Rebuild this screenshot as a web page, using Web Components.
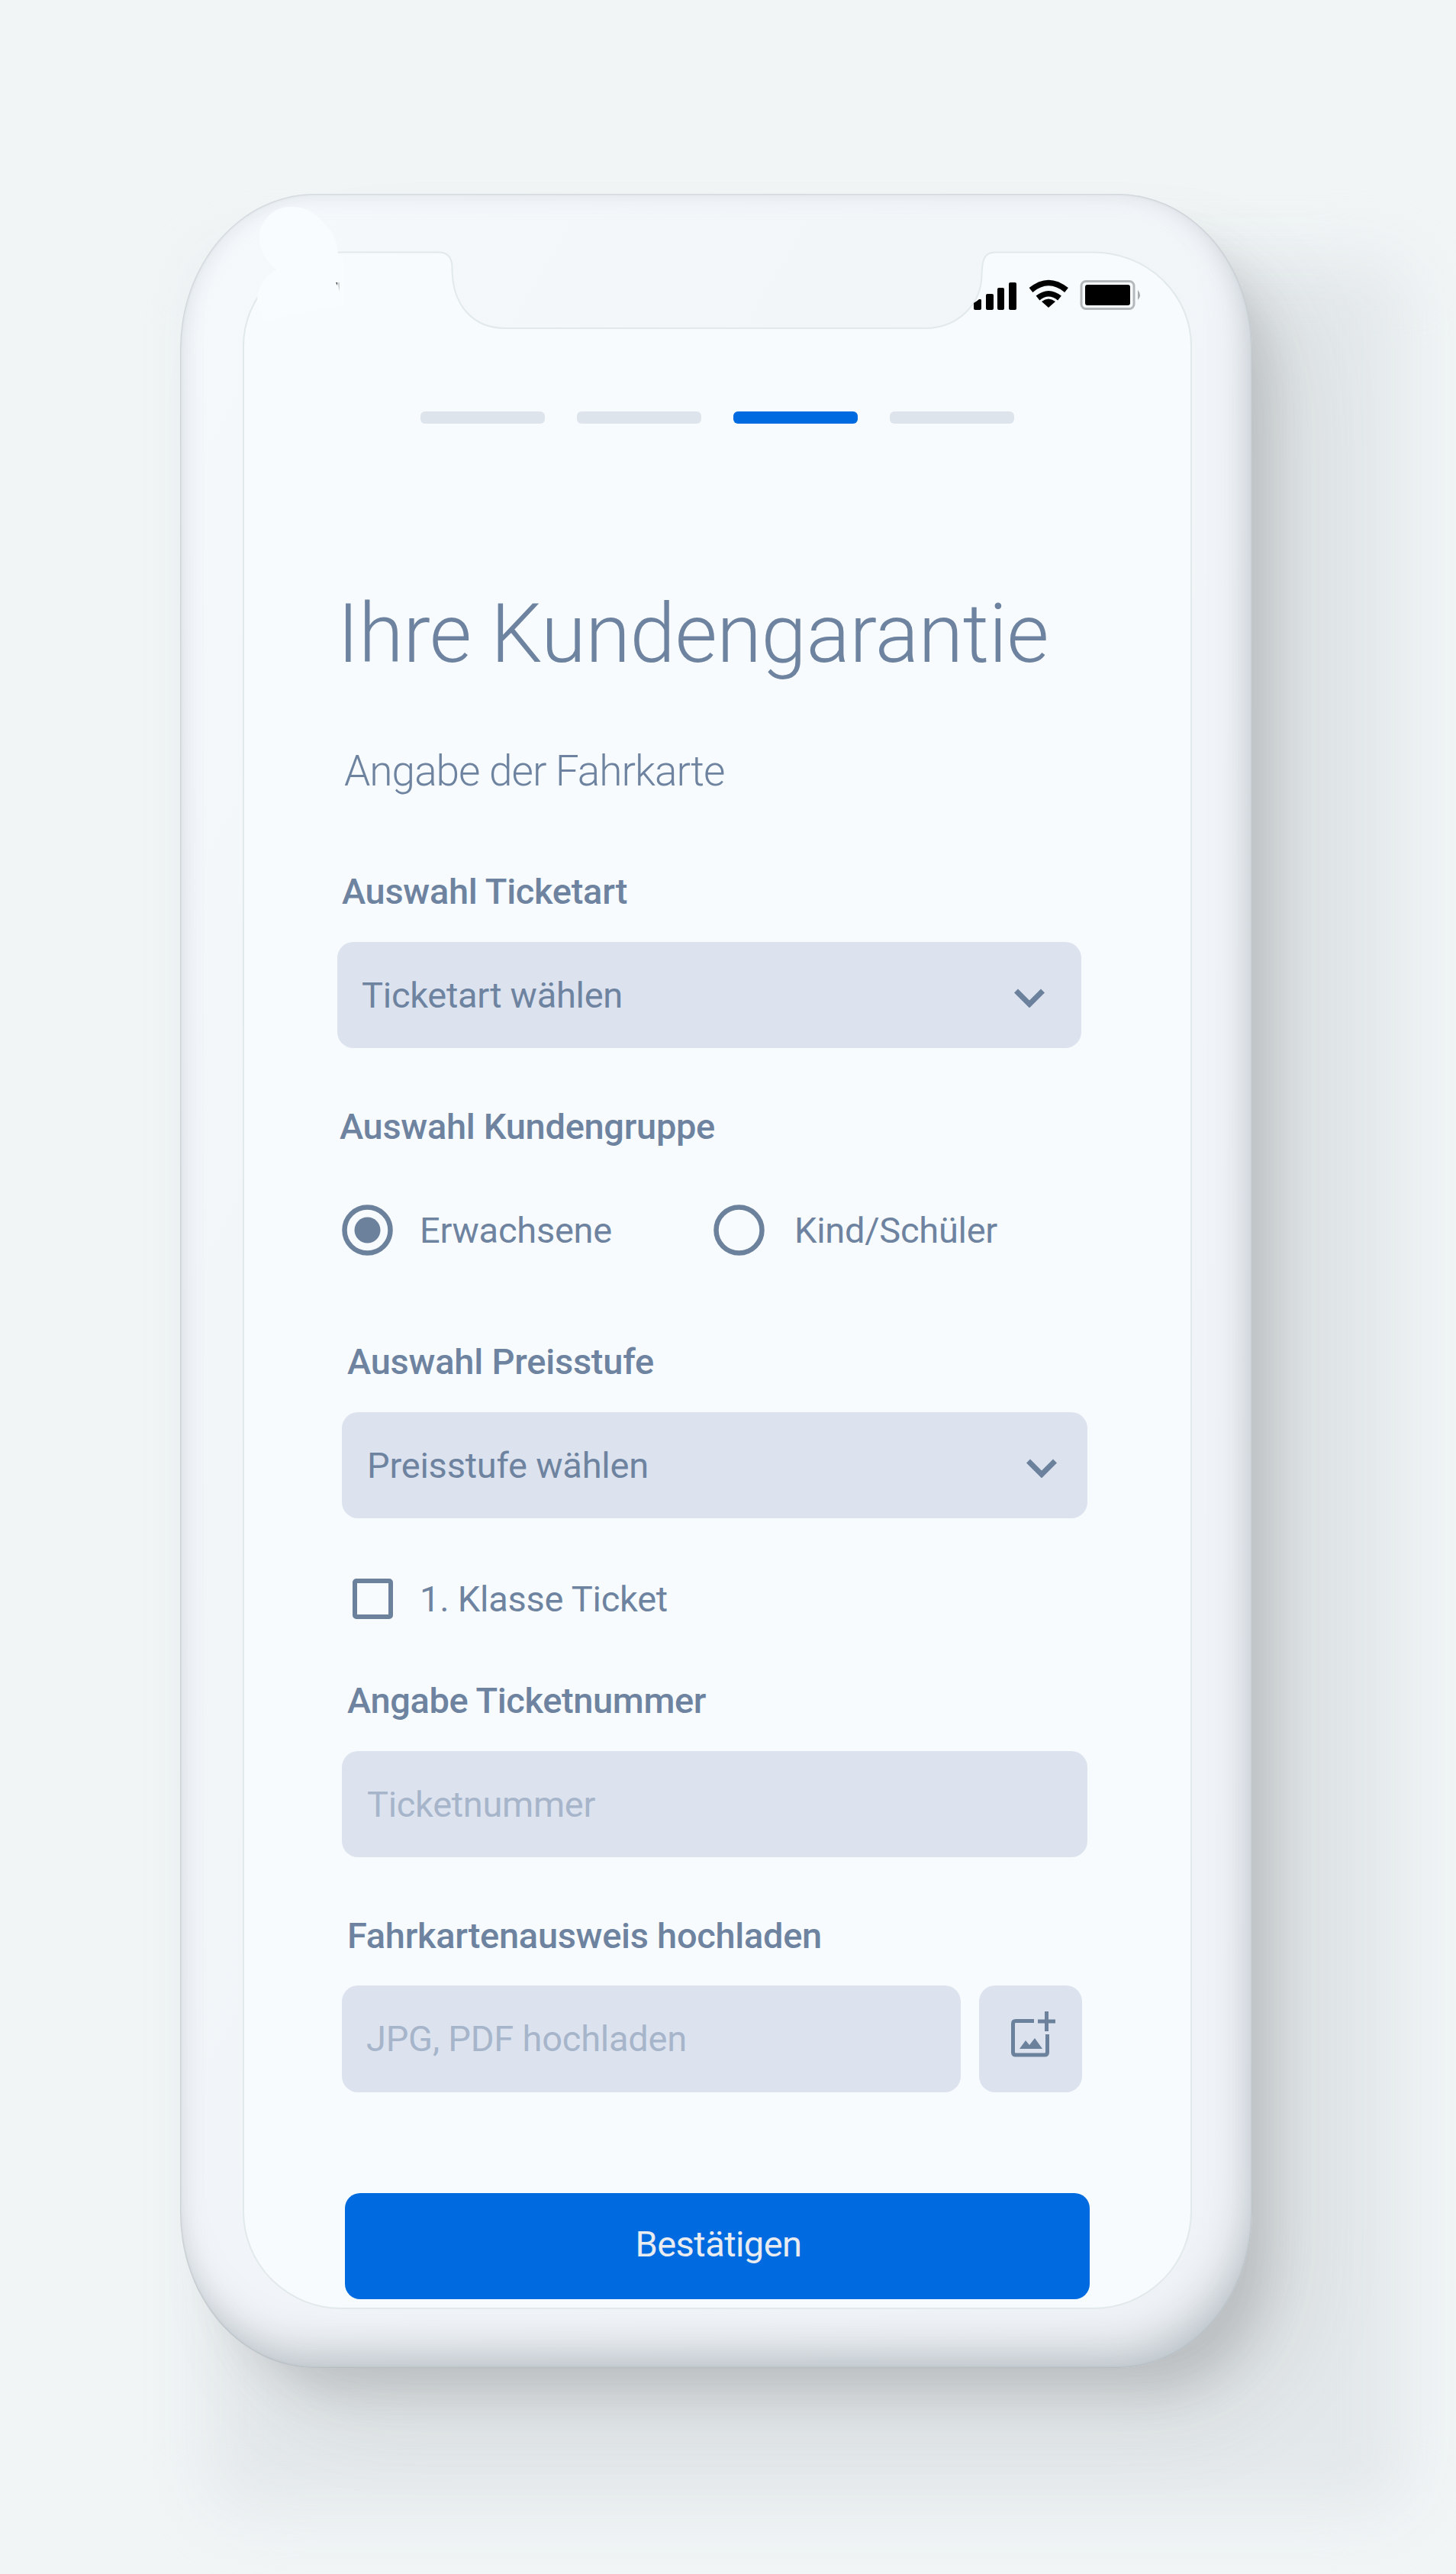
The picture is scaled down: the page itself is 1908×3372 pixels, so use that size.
<!DOCTYPE html>
<html lang="de">
<head>
<meta charset="utf-8">
<title>Ihre Kundengarantie</title>
<style>
    body {
        margin: 0;
        height: 3372px;
        overflow: hidden;
        background: #f1f5f6;
        color: #6e839f;
        font-family: Roboto, "Liberation Sans", sans-serif;
    }
</style>
</head>
<body>
<phone-frame>
    <step-bar steps="4" active="3"></step-bar>
    <form-title style="margin: 216px 0 0 123px"><fit-text width="932">Ihre Kundengarantie</fit-text></form-title>
    <form-subtitle style="margin: 87px 0 0 132px"><fit-text width="498.5">Angabe der Fahrkarte</fit-text></form-subtitle>

    <form-label style="margin: 99px 0 0 129px"><fit-text width="374">Auswahl Ticketart</fit-text></form-label>
    <form-field arrow style="margin: 39px 0 0 123px; width: 975px; --end: 48px"><fit-text width="342">Ticketart wählen</fit-text></form-field>

    <form-label style="margin: 76px 0 0 126px"><fit-text width="492">Auswahl Kundengruppe</fit-text></form-label>
    <radio-group>
        <radio-option checked><fit-text width="252">Erwachsene</fit-text></radio-option>
        <radio-option style="--gap: 39px"><fit-text width="266">Kind/Schüler</fit-text></radio-option>
    </radio-group>

    <form-label style="margin: 112px 0 0 136px"><fit-text width="402">Auswahl Preisstufe</fit-text></form-label>
    <form-field arrow style="margin: 39px 0 0 129px; width: 977px; --start: 33px; --end: 40px"><fit-text width="369">Preisstufe wählen</fit-text></form-field>
    <check-option><fit-text width="325">1. Klasse Ticket</fit-text></check-option>

    <form-label style="margin: 80px 0 0 136px"><fit-text width="470">Angabe Ticketnummer</fit-text></form-label>
    <form-field hint style="margin: 39px 0 0 129px; width: 977px; --start: 33px"><fit-text width="299">Ticketnummer</fit-text></form-field>

    <form-label style="margin: 76px 0 0 136px"><fit-text width="622">Fahrkartenausweis hochladen</fit-text></form-label>
    <upload-row>
        <form-field hint style="width: 811px; height: 140px"><fit-text width="420">JPG, PDF hochladen</fit-text></form-field>
    </upload-row>
    <submit-button><fit-text width="218">Bestätigen</fit-text></submit-button>
</phone-frame>

<script>
function define(name, html, setup) {
    const template = document.createElement('template');
    template.innerHTML = html;
    window.customElements.define(name, class extends HTMLElement {
        constructor() {
            super();
            this._shadowRoot = this.attachShadow({mode:'open'});
            this._shadowRoot.appendChild(template.content.cloneNode(true));
        }
        connectedCallback() {
            if (setup) setup(this, this._shadowRoot);
        }
    });
}

define('phone-frame', `
    <style>
        :host {
            display: block;
            position: relative;
            box-sizing: border-box;
            width: 1405px;
            height: 2848px;
            margin: 254px 0 0 236px;
            padding: 76px 79px 77px 83px;
        }
        .cast {
            position: absolute;
            inset: 86px -204px -188px 34px;
            border-radius: 50px;
            background: #e3e8ea;
            filter: blur(42px);
        }
        .shade {
            position: absolute;
            inset: 0;
            border-radius: 176px / 204px;
            background: linear-gradient(120deg, #f5f9fc 0%, #f3f6f9 30%, #eff2f6 100%);
            box-shadow:
                42px 48px 54px -16px rgba(95, 96, 98, .2),
                72px 76px 120px -18px rgba(110, 113, 116, .14);
        }
        .shade::after {
            content: "";
            position: absolute;
            inset: 0;
            border-radius: inherit;
            box-shadow:
                inset 0 0 2px 1px rgba(120, 130, 135, .26),
                inset 0 0 28px rgba(180, 189, 200, .36),
                inset -14px -36px 52px -12px rgba(128, 142, 147, .42);
        }
        .glass {
            position: absolute;
            left: 0;
            top: 0;
        }
        .screen {
            position: relative;
            display: flex;
            flex-direction: column;
            align-items: flex-start;
        }
    </style>
    <div class="cast"></div>
    <div class="shade"></div>
    <svg class="glass" width="1405" height="2848" viewBox="236 254 1405 2848">
        <path fill="#f7fbfe" stroke="#e1e9eb" stroke-width="2" d="M447 330.500H575Q592 330.500 592.500 350C592 400 620 430 662 430H1212C1254 430 1286 400 1286.500 360C1287 344 1288 330.500 1304 330.500H1433A128 123 0 0 1 1561 453.500V2897A128 127 0 0 1 1433 3024H447A128 127 0 0 1 319 2897V453.500A128 123 0 0 1 447 330.500Z"/>
        <path fill="#f8fcff" d="M443 337C443 320 439 305 422 290C414 279 400 271 382 271C362 270 348 283 341 300C337 318 343 338 362 353C345 363 338 376 337 394L345 420L450 400V337Z"/>
        <path fill="#42484c" d="M440 370H442V374Z"/>
        <path fill="#cdd2d5" d="M442 370H445V382Z"/>
    </svg>
    <div class="screen">
        <status-icons></status-icons>
        <slot></slot>
    </div>
`);

define('status-icons', `
    <style>
        :host {
            display: block;
            height: 209px;
            padding-left: 957px;
            box-sizing: border-box;
        }
        svg { display: block; margin-top: 36px; }
    </style>
    <svg width="222" height="42" viewBox="1276 366 222 42">
        <path d="M1276 397Q1281 394 1283 392H1285Q1286 392 1286 394V404Q1286 406 1284 406H1278Q1276 406 1276 404Z"/>
        <rect x="1292" y="385" width="10" height="21" rx="2"/>
        <rect x="1307" y="377" width="9" height="29" rx="2"/>
        <rect x="1322" y="370" width="10" height="36" rx="2"/>
        <g fill="none" stroke="#000" stroke-width="7.500">
            <path d="M1351 380Q1374 361 1397.500 380"/>
            <path d="M1360 390.500Q1374 379 1388.500 390.500"/>
        </g>
        <path d="M1374 403L1365 395Q1374 388 1383 395Z"/>
        <rect x="1417" y="368.500" width="69" height="36" rx="6" fill="none" stroke="#b5b8bb" stroke-width="3"/>
        <rect x="1422" y="373" width="59" height="27" rx="3"/>
        <path fill="#a9acae" d="M1491 380Q1497 386.500 1491 393Z"/>
    </svg>
`);

define('step-bar', `
    <style>
        :host {
            display: flex;
            gap: 42.500px;
            margin-left: 232px;
        }
        span {
            width: 162.500px;
            height: 16px;
            border-radius: 6px;
            background: #dde4ec;
        }
        .active { background: #006be0; }
    </style>
`, (host, root) => {
    for (let i = 1; i <= Number(host.getAttribute('steps')); i++) {
        const step = document.createElement('span');
        if (i === Number(host.getAttribute('active'))) step.className = 'active';
        root.appendChild(step);
    }
});

define('form-title', `
    <style>
        :host { display: block; font-size: 107px; font-weight: 300; line-height: 120px; }
    </style>
    <slot></slot>
`);

define('form-subtitle', `
    <style>
        :host { display: block; font-size: 55px; font-weight: 300; line-height: 64px; }
    </style>
    <slot></slot>
`);

define('form-label', `
    <style>
        :host { display: block; font-size: 47px; font-weight: 500; line-height: 54px; }
    </style>
    <slot></slot>
`);

define('form-field', `
    <style>
        :host {
            display: flex;
            align-items: center;
            justify-content: space-between;
            box-sizing: border-box;
            height: 139px;
            padding: 0 var(--end, 32px) 0 var(--start, 32px);
            border-radius: 21px;
            background: #dce3ef;
            font-size: 47px;
            line-height: 54px;
        }
        :host([hint]) { color: #a7b5ca; }
        svg { display: none; margin-top: 7px; }
        :host([arrow]) svg { display: block; }
    </style>
    <slot></slot>
    <svg width="40" height="25" viewBox="0 0 40 25">
        <path d="M2.500 3L20 20.500L37.500 3" fill="none" stroke="#6b819c" stroke-width="7"/>
    </svg>
`);

define('radio-group', `
    <style>
        :host { display: flex; margin: 75px 0 0 129px; }
    </style>
    <slot></slot>
`);

define('radio-option', `
    <style>
        :host {
            display: flex;
            align-items: center;
            gap: var(--gap, 35px);
            width: 487px;
            font-size: 47px;
            line-height: 54px;
        }
        circle { fill: none; stroke: #6b819c; stroke-width: 6.500; }
        .dot { display: none; fill: #6b819c; stroke: none; }
        :host([checked]) .dot { display: inline; }
    </style>
    <svg width="67" height="67" viewBox="0 0 67 67">
        <circle cx="33.500" cy="33.500" r="30"/>
        <circle class="dot" cx="33.500" cy="33.500" r="17"/>
    </svg>
    <slot></slot>
`);

define('check-option', `
    <style>
        :host {
            display: flex;
            align-items: center;
            gap: 35px;
            margin: 79px 0 0 143px;
            height: 53px;
            font-size: 47px;
            line-height: 54px;
        }
        .box {
            box-sizing: border-box;
            width: 53px;
            height: 53px;
            border: 6px solid #6b819c;
            border-radius: 5px;
        }
    </style>
    <div class="box"></div>
    <slot></slot>
`);

define('upload-row', `
    <style>
        :host { display: flex; gap: 24px; margin: 38px 0 0 129px; }
        .add {
            display: flex;
            align-items: center;
            justify-content: center;
            width: 135px;
            height: 140px;
            border-radius: 21px;
            background: #dce3ef;
        }
        svg { margin: 0 0 10px 6px; }
    </style>
    <slot></slot>
    <div class="add">
        <svg width="60" height="62" viewBox="0 0 60 62">
            <g fill="none" stroke="#6b819c" stroke-width="5">
                <path d="M31 12.500H7Q3.500 12.500 3.500 16V53.500Q3.500 57 7 57H45Q48.500 57 48.500 53.500V30"/>
                <path d="M36 13H59M47.500 0V26"/>
            </g>
            <path fill="#6b819c" d="M12 49L20 38L25 44L32 35L42 49Z"/>
        </svg>
    </div>
`);

define('submit-button', `
    <style>
        :host {
            display: flex;
            align-items: center;
            justify-content: center;
            box-sizing: border-box;
            width: 976px;
            height: 139px;
            padding: 0 0 5px 3px;
            margin: 132px 0 0 133px;
            border-radius: 20px;
            background: #006be0;
            color: #e8ecf1;
            font-size: 47px;
            line-height: 54px;
        }
    </style>
    <slot></slot>
`);

// registered last, the font of the parents has to be set before measuring
define('fit-text', `
    <style>
        :host { display: inline-block; white-space: nowrap; }
    </style>
    <slot></slot>
`, (host) => {
    const rest = Number(host.getAttribute('width')) - host.getBoundingClientRect().width;
    host.style.letterSpacing = rest / host.textContent.length + 'px';
});
</script>
</body>
</html>
